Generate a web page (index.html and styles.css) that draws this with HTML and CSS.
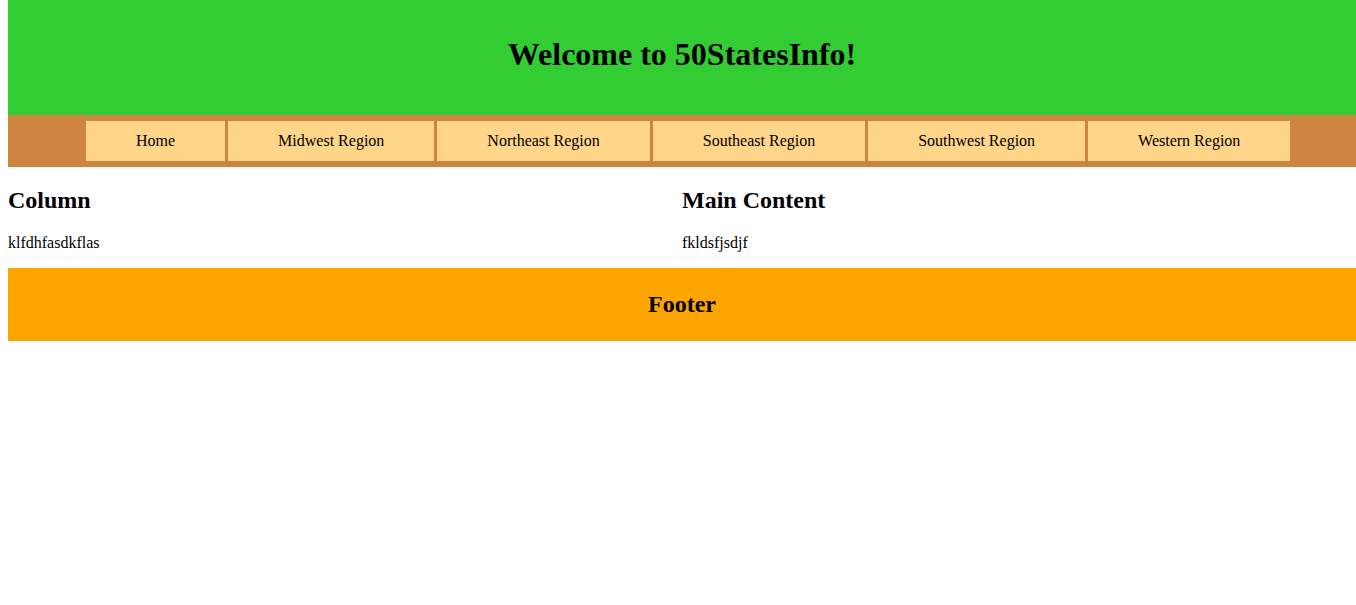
FILE: index.html
```html
<!DOCTYPE html>
<html>
<head>
<meta charset="utf-8">
<title>50StatesInfo</title>
<link rel="stylesheet" href="styles.css">
</head>
<body>
<header class="site-header">
  <h1 class="site-title">Welcome to 50StatesInfo!</h1>
</header>
<nav class="site-nav">
  <a class="nav-item" href="#">Home</a>
  <a class="nav-item" href="#">Midwest Region</a>
  <a class="nav-item" href="#">Northeast Region</a>
  <a class="nav-item" href="#">Southeast Region</a>
  <a class="nav-item" href="#">Southwest Region</a>
  <a class="nav-item" href="#">Western Region</a>
</nav>
<div class="columns">
  <section class="col">
    <h2 class="col-title">Column</h2>
    <p class="col-text">klfdhfasdkflas</p>
  </section>
  <section class="col">
    <h2 class="col-title">Main Content</h2>
    <p class="col-text">fkldsfjsdjf</p>
  </section>
</div>
<footer class="site-footer">
  <h2 class="footer-title">Footer</h2>
</footer>
</body>
</html>
```

FILE: styles.css
```css
html, body {
  font-family: "Liberation Serif", "Times New Roman", serif;
  font-size: 16px;
  color: #000;
}
body {
  margin: 0 0 0 8px;
}
.site-header {
  background: #32cd32;
  height: 115px;
  display: flex;
  align-items: center;
  justify-content: center;
}
.site-title {
  margin: 0;
  font-size: 32px;
  font-weight: bold;
  position: relative;
  top: -3px;
}
.site-nav {
  background: #cd853f;
  display: flex;
  gap: 3px;
  padding: 6px 0 6px 78px;
}
.nav-item {
  display: block;
  background: #ffd58a;
  height: 40px;
  line-height: 40px;
  padding: 0 50px;
  color: #000;
  text-decoration: none;
}
.columns {
  display: grid;
  grid-template-columns: 1fr 1fr;
}
.col-title {
  font-size: 24px;
  margin: 20px 0 20px;
}
.col-text {
  margin: 16px 0;
}
.site-footer {
  background: #ffa500;
  padding: 3px 0;
  text-align: center;
}
.footer-title {
  font-size: 24px;
  margin: 20px 0;
}
```
